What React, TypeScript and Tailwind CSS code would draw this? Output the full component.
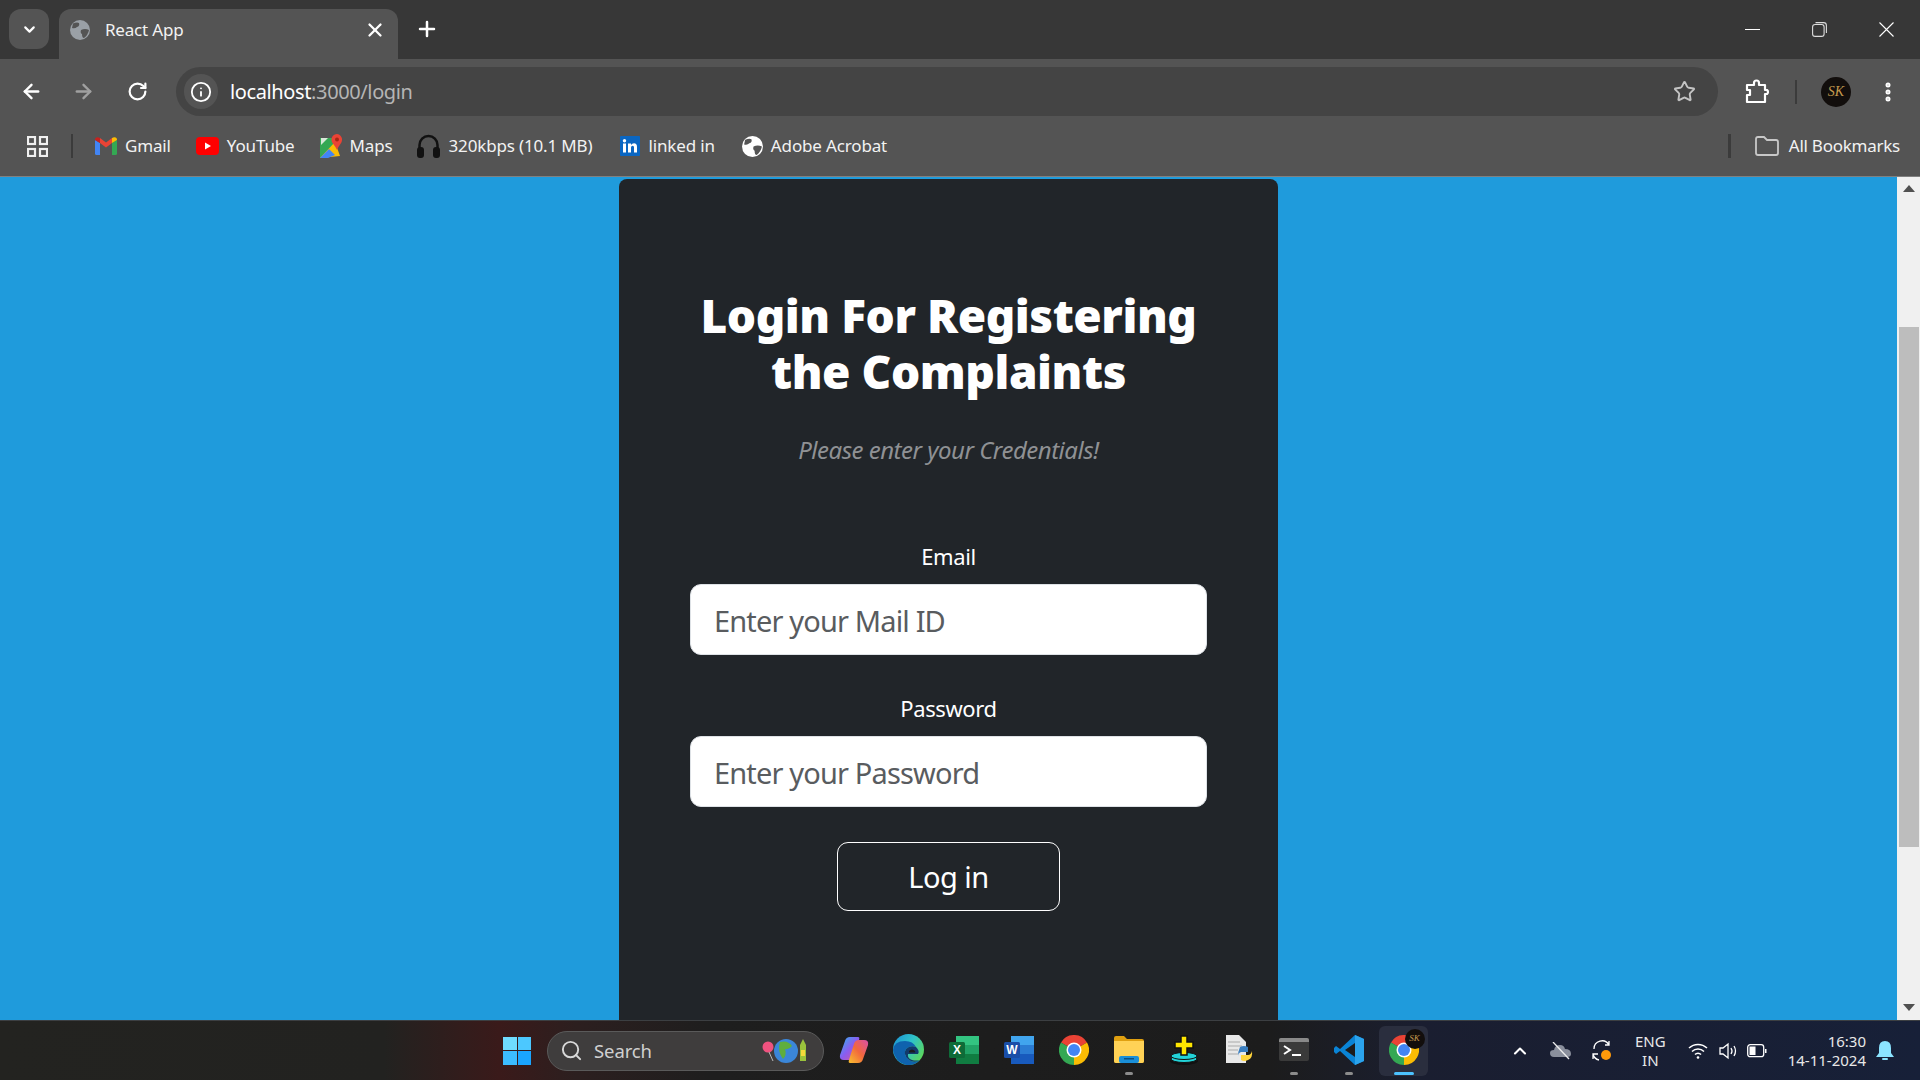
import { ArrowLeft, ArrowRight, ChevronDown, ChevronUp, Info, MoreVertical, Plus, RotateCw, Search, Star, X } from "lucide-react";
import type { ReactNode } from "react";

const uiFont = "font-['Noto_Sans',sans-serif]";

const GlobeIcon = ({ size = 20, color = "#9aa0a6", cut = "#545454" }: { size?: number; color?: string; cut?: string }) => (
  <svg width={size} height={size} viewBox="0 0 20 20">
    <circle cx="10" cy="10" r="10" fill={color} />
    <path d="M3 3.5 Q7 2 9 3 Q10 6 7 7 Q5 9 2 8 Z M11 10 Q15 8 19 10 Q18 15 14 18 Q12 18 12 14 Q10 13 11 10 Z" fill={cut} />
  </svg>
);

const GmailIcon = () => (
  <svg width="22" height="18" viewBox="0 0 22 18">
    <path d="M0 3 L5 6 V18 H1.5 Q0 18 0 16.5 Z" fill="#4285f4" />
    <path d="M22 3 L17 6 V18 H20.5 Q22 18 22 16.5 Z" fill="#34a853" />
    <path d="M5 6 L11 10.5 L17 6 V1 L11 5.5 L5 1 Z" fill="#ea4335" />
    <path d="M0 3 Q0 0 3 .3 L5 1 V6 Z" fill="#c5221f" />
    <path d="M22 3 Q22 0 19 .3 L17 1 V6 Z" fill="#fbbc04" />
  </svg>
);

const YoutubeIcon = () => (
  <svg width="23" height="18" viewBox="0 0 23 18">
    <rect width="23" height="18" rx="4" fill="#ff0000" />
    <path d="M9 5.5 L15 9 L9 12.5 Z" fill="#fff" />
  </svg>
);

const MapsIcon = () => (
  <svg width="22" height="24" viewBox="0 0 22 24">
    <path d="M0 4 H15 V20 L0 24 Z" fill="#34a853" />
    <path d="M0 24 L15 8 L20 22 Z" fill="#fbbc04" />
    <path d="M0 24 L9 15 L15 21 L8 24 Z" fill="#4285f4" />
    <path d="M1 4 H8 L1 11 Z" fill="#d9e8d9" />
    <path d="M17 0 A5.5 5.5 0 0 1 22 6 C22 9 19 11 17 16 C15 11 11.500 9 11.500 6 A5.500 5.500 0 0 1 17 0 Z" fill="#ea4335" />
    <circle cx="17" cy="5.500" r="2" fill="#a52714" />
  </svg>
);

const HeadphonesIcon = () => (
  <svg width="23" height="24" viewBox="0 0 23 24">
    <path d="M2.500 15 V11 A9 9 0 0 1 20.500 11 V15" fill="none" stroke="#111" strokeWidth="2.500" />
    <rect x="0" y="13" width="7" height="11" rx="3" fill="#111" />
    <rect x="16" y="13" width="7" height="11" rx="3" fill="#111" />
  </svg>
);

const LinkedinIcon = () => (
  <svg width="20" height="20" viewBox="0 0 20 20">
    <rect width="20" height="20" rx="1" fill="#0a66c2" />
    <rect x="3" y="7.500" width="3" height="9" fill="#fff" />
    <circle cx="4.500" cy="4.800" r="1.700" fill="#fff" />
    <path d="M8 7.500 H11 V9 Q12 7.300 14 7.300 Q17 7.300 17 11 V16.500 H14 V11.500 Q14 9.800 12.700 9.800 Q11 9.800 11 11.500 V16.500 H8 Z" fill="#fff" />
  </svg>
);

const ChromeIcon = ({ size = 30 }: { size?: number }) => (
  <svg width={size} height={size} viewBox="0 0 30 30">
    <path d="M15 15 L2 7.500 A15 15 0 0 1 28 7.500 Z" fill="#ea4335" />
    <path d="M15 15 L2 7.500 A15 15 0 0 0 15 30 Z" fill="#34a853" />
    <path d="M15 15 L28 7.500 A15 15 0 0 1 15 30 Z" fill="#fbbc04" />
    <circle cx="15" cy="15" r="7.500" fill="#fff" />
    <circle cx="15" cy="15" r="6" fill="#4285f4" />
  </svg>
);

const SkAvatar = ({ small = false }: { small?: boolean }) => (
  <span
    className={`flex items-center justify-center rounded-full bg-[#120e0c] font-['Liberation_Serif',serif] italic leading-none text-[#c49a4e] ${
      small ? "h-[20px] w-[20px] text-[9px]" : "h-[30px] w-[30px] text-[14px]"
    }`}
  >
    SK
  </span>
);

const TaskIcon = ({ children, running = false, active = false }: { children: ReactNode; running?: boolean; active?: boolean }) => (
  <div className="flex w-[55px] justify-center">
    <div className={`flex h-[50px] w-[49px] flex-col items-center rounded-md pt-[2px] ${active ? "bg-[#2a2e3e]" : ""}`}>
      <div className="flex h-[44px] items-center justify-center">{children}</div>
      {running && <div className="h-[3px] w-[8px] rounded-full bg-[#8c8c8c]" />}
      {active && <div className="h-[3px] w-[20px] rounded-full bg-[#4cc2ff]" />}
    </div>
  </div>
);

const Bookmark = ({ icon, label, className }: { icon: ReactNode; label: string; className: string }) => (
  <div className={`flex items-center gap-[8px] ${className}`}>
    {icon}
    <span className="text-[17px] tracking-[-0.15px] text-[#f2f2f2]">{label}</span>
  </div>
);

const Field = ({ label, placeholder, type }: { label: string; placeholder: string; type: string }) => (
  <div className="flex flex-col items-center">
    <label className="mb-[12px] text-[22px] leading-[32px] tracking-[-0.4px] text-white">{label}</label>
    <input
      type={type}
      placeholder={placeholder}
      className="h-[71px] w-[517px] rounded-[11px] border border-[#dee2e6] bg-white px-[23px] pt-[2px] text-[29px] tracking-[-0.85px] text-[#212529] outline-none placeholder:text-[#595c5f]"
    />
  </div>
);

export default function App() {
  return (
    <div className={`flex h-screen w-full flex-col overflow-hidden ${uiFont}`}>
      {/* tab strip */}
      <div className="flex h-[59px] shrink-0 items-start bg-[#373737] pl-[9px]">
        <div className="mt-[9px] flex h-[40px] w-[40px] items-center justify-center rounded-[12px] bg-[#545454]">
          <ChevronDown size={17} strokeWidth={3} color="#fff" />
        </div>
        <div className="mt-[9px] ml-[10px] flex h-[50px] w-[339px] items-start rounded-t-[12px] bg-[#545454] pl-[11px] pr-[12px] pt-[11px]">
          <GlobeIcon />
          <span className="ml-[15px] flex-1 text-[17px] leading-[20px] tracking-[-0.2px] text-[#f2f2f2]">React App</span>
          <X size={22} strokeWidth={2.500} color="#fff" className="-mt-[1px]" />
        </div>
        <Plus size={24} strokeWidth={2.500} color="#fff" className="mt-[17px] ml-[17px]" />
        <div className="flex-1" />
        <div className="mt-[22px] flex items-center gap-[52px] pr-[26px]">
          <div className="h-[1px] w-[15px] bg-white" />
          <svg width="15" height="15" viewBox="0 0 15 15" fill="none" stroke="#ddd" strokeWidth="1.100">
            <rect x=".6" y="2.500" width="11.500" height="11.900" rx="2.500" />
            <path d="M3.500 .6 H11.500 Q14.400 .6 14.400 3.500 V11" />
          </svg>
          <svg width="15" height="15" viewBox="0 0 15 15" fill="none" stroke="#fff" strokeWidth="1.100">
            <path d="M.5 .5 L14.500 14.500 M14.500 .5 L.5 14.500" />
          </svg>
        </div>
      </div>

      {/* toolbar */}
      <div className="flex h-[57px] shrink-0 items-center bg-[#545454] pt-[8px] pl-[20px] pr-[20px]">
        <ArrowLeft size={23} strokeWidth={2.500} color="#fff" />
        <ArrowRight size={23} strokeWidth={2.500} color="#a0a0a0" className="ml-[29px]" />
        <RotateCw size={21} strokeWidth={2.500} color="#fff" className="ml-[32px]" />
        <div className="ml-[28px] flex h-[49px] w-[1542px] items-center rounded-full bg-[#444444] pl-[8px] pr-[22px]">
          <div className="flex h-[35px] w-[34px] items-center justify-center rounded-full bg-[#545454]">
            <Info size={22} strokeWidth={2} color="#fff" />
          </div>
          <span className="ml-[12px] flex-1 text-[20px] leading-[26px] tracking-[-0.38px] text-white">
            localhost<span className="text-[#b5b5b5]">:3000/login</span>
          </span>
          <Star size={23} strokeWidth={2} color="#c4c4c4" />
        </div>
        <svg width="26" height="26" viewBox="0 0 26 26" fill="none" stroke="#fff" strokeWidth="2.200" className="ml-[27px]">
          <path d="M2 6 H9 V4 A2.500 2.500 0 0 1 14 4 V6 H20 V11 H22 A2.500 2.500 0 0 1 22 15 H20 V23 H2 V16 H5 V11 H2 Z" strokeLinejoin="round" />
        </svg>
        <div className="ml-[24px] h-[24px] w-[2px] bg-[#3b3b3b]" />
        <div className="ml-[24px]"><SkAvatar /></div>
        <MoreVertical size={24} strokeWidth={3} color="#fff" className="ml-[25px]" />
      </div>

      {/* bookmarks */}
      <div className="flex h-[61px] shrink-0 items-center border-b-[1px] border-[#808080] bg-[#545454] pl-[27px] pr-[20px]">
        <svg width="21" height="21" viewBox="0 0 21 21" fill="none" stroke="#f0f0f0" strokeWidth="2.200">
          <rect x="1" y="1" width="7" height="7" />
          <rect x="13" y="1" width="7" height="7" />
          <rect x="1" y="13" width="7" height="7" />
          <rect x="13" y="13" width="7" height="7" />
        </svg>
        <div className="ml-[23px] mr-[22px] h-[24px] w-[2px] bg-[#3b3b3b]" />
        <Bookmark icon={<GmailIcon />} label="Gmail" className="mr-[25px]" />
        <Bookmark icon={<YoutubeIcon />} label="YouTube" className="mr-[25px]" />
        <Bookmark icon={<MapsIcon />} label="Maps" className="mr-[25px]" />
        <Bookmark icon={<HeadphonesIcon />} label="320kbps (10.1 MB)" className="mr-[28px]" />
        <Bookmark icon={<LinkedinIcon />} label="linked in" className="mr-[27px]" />
        <Bookmark icon={<GlobeIcon size={21} color="#fff" />} label="Adobe Acrobat" className="" />
        <div className="flex-1" />
        <div className="mr-[24px] h-[24px] w-[3px] bg-[#3b3b3b]" />
        <svg width="24" height="20" viewBox="0 0 24 20" fill="none" stroke="#c8c8c8" strokeWidth="1.800" className="mr-[10px]">
          <path d="M1 3 Q1 1 3 1 H9 L12 4 H21 Q23 4 23 6 V17 Q23 19 21 19 H3 Q1 19 1 17 Z" />
        </svg>
        <span className="text-[17px] tracking-[-0.25px] text-[#f2f2f2]">All Bookmarks</span>
      </div>

      {/* page */}
      <div className="flex min-h-0 flex-1 bg-[#1f9bdc]">
        <div className="flex min-w-0 flex-1 justify-center">
          <div className="mt-[2px] flex w-[659px] flex-col items-center rounded-t-[8px] bg-[#212529] pt-[108px]">
            <h2 className="w-[540px] text-center text-[46px] leading-[56px] font-black tracking-[-0.45px] text-white">
              Login For Registering the Complaints
            </h2>
            <p className="mt-[36px] mb-[75px] text-[24px] leading-[30px] tracking-[-0.5px] text-[#8f9194] italic">
              Please enter your Credentials!
            </p>
            <div className="flex flex-col gap-[37px]">
              <Field label="Email" placeholder="Enter your Mail ID" type="email" />
              <Field label="Password" placeholder="Enter your Password" type="password" />
            </div>
            <button className="mt-[35px] h-[69px] w-[223px] rounded-[11px] border border-white pt-[1px] text-[29px] tracking-[-0.5px] text-white">
              Log in
            </button>
          </div>
        </div>
        <div className="flex w-[23px] shrink-0 flex-col items-center bg-[#f0f0f0]">
          <div className="mt-[8px] h-0 w-0 border-x-[6px] border-b-[7px] border-x-transparent border-b-[#505050]" />
          <div className="mt-[135px] ml-[1px] h-[520px] w-[20px] bg-[#bdbdbd]" />
          <div className="flex-1" />
          <div className="mb-[9px] h-0 w-0 border-x-[6px] border-t-[7px] border-x-transparent border-t-[#505050]" />
        </div>
      </div>

      {/* taskbar */}
      <div className="flex h-[60px] shrink-0 items-center border-t border-[#3c3f42] bg-[linear-gradient(90deg,#232320_0%,#222220_20%,#3a1a1a_26%,#2c1f1f_30%,#1e1e1e_37%,#1c1c1c_66%,#1a1e30_74%,#172038_100%)]">
        <div className="ml-[499px] flex h-[36px] w-[36px] items-center justify-center">
          <div className="grid h-[28px] w-[28px] grid-cols-2 gap-[1px]">
            <div className="bg-[#6fdcff]" />
            <div className="bg-[#4cc8ff]" />
            <div className="bg-[#3cbcff]" />
            <div className="bg-[#1aa5ff]" />
          </div>
        </div>
        <div className="ml-[12px] flex h-[40px] w-[277px] items-center rounded-full border border-[#5a5a5a] bg-[#3f3d3d] pl-[12px] pr-[14px]">
          <Search size={23} strokeWidth={2} color="#d8d8d8" />
          <span className="ml-[11px] flex-1 text-[18.500px] tracking-[-0.1px] text-[#d0d0d0]">Search</span>
          <svg width="48" height="28" viewBox="0 0 46 28">
            <circle cx="6" cy="10" r="5.500" fill="#f0527f" />
            <path d="M7 15 L11 24" stroke="#bbb" strokeWidth="1" />
            <circle cx="24" cy="14" r="12" fill="#3b86d8" />
            <path d="M18 5 Q26 3 30 9 Q27 13 23 12 Q25 18 21 22 Q15 14 18 5 Z" fill="#5fae3e" />
            <path d="M38 8 L41 2 L44 8 V24 H38 Z" fill="#9ac23c" />
            <rect x="39" y="13" width="4" height="6" fill="#f4d93a" />
          </svg>
        </div>
        <div className="ml-[2px] flex items-center">
          <TaskIcon>
            <svg width="30" height="28" viewBox="0 0 30 28">
              <defs>
                <linearGradient id="cpa" x1="0" y1="0" x2="1" y2="1">
                  <stop offset="0" stopColor="#2bb7f0" />
                  <stop offset=".5" stopColor="#8a5cf0" />
                  <stop offset="1" stopColor="#e0558f" />
                </linearGradient>
                <linearGradient id="cpb" x1="0" y1="1" x2="1" y2="0">
                  <stop offset="0" stopColor="#f9c02e" />
                  <stop offset=".5" stopColor="#f2683c" />
                  <stop offset="1" stopColor="#d84fa8" />
                </linearGradient>
              </defs>
              <path d="M11 1 H19 Q21 1 20 4 L15 20 Q14 24 10 24 H5 Q0 24 1 19 L6 5 Q7 1 11 1 Z" fill="url(#cpa)" />
              <path d="M19 27 H11 Q9 27 10 24 L15 8 Q16 4 20 4 H25 Q30 4 29 9 L24 23 Q23 27 19 27 Z" fill="url(#cpb)" />
            </svg>
          </TaskIcon>
          <TaskIcon>
            <svg width="31" height="31" viewBox="0 0 31 31">
              <defs>
                <linearGradient id="edg" x1="0" y1="0" x2="1" y2=".6">
                  <stop offset="0" stopColor="#1a8fd8" />
                  <stop offset=".55" stopColor="#2fc3c8" />
                  <stop offset="1" stopColor="#5ad660" />
                </linearGradient>
              </defs>
              <circle cx="15.500" cy="15.500" r="15.500" fill="url(#edg)" />
              <path d="M0 16 Q1 7 12 7 Q20 7 23 13 Q17 11 13 15 Q10 20 15 25 Q20 30 27 26 Q21 32 13 31 Q2 28 0 16 Z" fill="#0f62ae" />
              <path d="M13 15 Q17 11 23 13 Q27 17 25 20 H15 Q14 24 19 26 Q23 27 27 26 Q20 30 15 25 Q10 20 13 15 Z" fill="#123a6b" />
              <path d="M16 17 Q19 14 22 17 Q22.500 18 22 18.500 H16 Z" fill="#1c1c1c" />
            </svg>
          </TaskIcon>
          <TaskIcon>
            <svg width="30" height="28" viewBox="0 0 30 28">
              <rect x="7" y="0" width="23" height="9" fill="#33c481" />
              <rect x="7" y="9" width="23" height="9" fill="#21a366" />
              <rect x="7" y="18" width="23" height="10" fill="#107c41" />
              <rect x="0" y="6" width="16" height="16" rx="1.500" fill="#0e6b38" />
              <text x="8" y="18" textAnchor="middle" fontSize="12" fontWeight="700" fill="#fff" fontFamily="Liberation Sans">X</text>
            </svg>
          </TaskIcon>
          <TaskIcon>
            <svg width="30" height="28" viewBox="0 0 30 28">
              <rect x="7" y="0" width="23" height="9" fill="#41a5ee" />
              <rect x="7" y="9" width="23" height="9" fill="#2b7cd3" />
              <rect x="7" y="18" width="23" height="10" fill="#185abd" />
              <rect x="0" y="6" width="16" height="16" rx="1.500" fill="#1a4ea8" />
              <text x="8" y="18" textAnchor="middle" fontSize="12" fontWeight="700" fill="#fff" fontFamily="Liberation Sans">W</text>
            </svg>
          </TaskIcon>
          <TaskIcon><ChromeIcon /></TaskIcon>
          <TaskIcon running>
            <svg width="30" height="27" viewBox="0 0 30 27">
              <path d="M0 2 Q0 0 2 0 H10 L13 3 H28 Q30 3 30 5 V25 Q30 27 28 27 H2 Q0 27 0 25 Z" fill="#e0a010" />
              <path d="M0 5 H30 V25 Q30 27 28 27 H2 Q0 27 0 25 Z" fill="#ffd256" />
              <rect x="5" y="20" width="20" height="7" rx="2" fill="#1a8fd8" />
              <rect x="10" y="22" width="10" height="1.500" fill="#0e4f80" />
            </svg>
          </TaskIcon>
          <TaskIcon>
            <svg width="30" height="30" viewBox="0 0 30 30">
              <ellipse cx="15" cy="26" rx="14" ry="4" fill="#111" />
              <ellipse cx="15" cy="24" rx="13" ry="3.500" fill="#22d3d8" stroke="#111" />
              <ellipse cx="15" cy="21" rx="13" ry="3.500" fill="#22d3d8" stroke="#111" />
              <path d="M12 1 H18 V7 H24 V13 H18 V20 H12 V13 H6 V7 H12 Z" fill="#ffe600" stroke="#111" strokeWidth="1.500" />
            </svg>
          </TaskIcon>
          <TaskIcon>
            <svg width="30" height="30" viewBox="0 0 30 30">
              <path d="M2 0 H15 L22 7 V28 H2 Z" fill="#e8e8e8" />
              <path d="M4 7 H16 M4 11 H18 M4 15 H14 M4 19 H14" stroke="#aaa" strokeWidth="1" />
              <path d="M16 12 Q20 10 24 12 V17 H17 Q14 18 14 22 Q14 16 16 12 Z" fill="#3b7fc0" />
              <path d="M28 16 Q29 23 24 25 Q20 27 17 25 V20 H24 Q27 20 28 16 Z" fill="#ffd43b" />
            </svg>
          </TaskIcon>
          <TaskIcon running>
            <svg width="30" height="23" viewBox="0 0 30 23">
              <rect width="30" height="23" rx="2" fill="#3a3a3a" />
              <path d="M0 2 Q0 0 2 0 H28 Q30 0 30 2 V4 H0 Z" fill="#8a8a8a" />
              <path d="M5 8 L11 12 L5 16" stroke="#fff" strokeWidth="2" fill="none" />
              <rect x="13" y="16" width="9" height="2" fill="#fff" />
            </svg>
          </TaskIcon>
          <TaskIcon running>
            <svg width="30" height="30" viewBox="0 0 30 30">
              <path d="M21 0 L30 4 V26 L21 30 L6 16 L2 19 L0 17 V13 L2 11 L6 14 Z" fill="#0a84d6" />
              <path d="M21 8 L11 15 L21 22 Z" fill="#1c1c1c" />
              <path d="M21 0 L30 4 V26 L21 30 Z" fill="#2ba3ec" />
            </svg>
          </TaskIcon>
          <TaskIcon active>
            <div className="relative">
              <ChromeIcon />
              <div className="absolute -top-[6px] -right-[6px]"><SkAvatar small /></div>
            </div>
          </TaskIcon>
        </div>
        <div className="flex-1" />
        <div className="flex items-center pr-[26px] text-white">
          <ChevronUp size={20} strokeWidth={2.500} color="#fff" className="mr-[1px]" />
          <svg width="22" height="18" viewBox="0 0 22 18" className="ml-[19px]">
            <path d="M4 15 Q0 15 0 11 Q0 8 4 8 Q5 3 10 3 Q14 3 15 7 Q21 7 21 12 Q21 15 17 15 Z" fill="#8a8f9c" />
            <path d="M3 0 L19 17" stroke="#eee" strokeWidth="1.300" />
          </svg>
          <svg width="22" height="22" viewBox="0 0 22 22" fill="none" stroke="#fff" strokeWidth="1.300" className="ml-[19px]">
            <path d="M3 9 A8 8 0 0 1 18 5 M18 1 V5 H14" />
            <path d="M2 14 A8 8 0 0 0 8 20 M2 19 V14 H7" />
            <circle cx="15" cy="15" r="5" fill="#ff9a0a" stroke="none" />
          </svg>
          <div className="ml-[22px] flex flex-col items-center text-[15px] leading-[19px] text-[#e8e8e8]">
            <span>ENG</span>
            <span>IN</span>
          </div>
          <svg width="20" height="16" viewBox="0 0 20 16" fill="none" stroke="#fff" strokeWidth="1.500" className="ml-[22px]">
            <path d="M1 5 A13 13 0 0 1 19 5 M4 8.500 A8.500 8.500 0 0 1 16 8.500 M7 11.500 A4 4 0 0 1 13 11.500" />
            <circle cx="10" cy="14.500" r="1.300" fill="#fff" stroke="none" />
          </svg>
          <svg width="20" height="18" viewBox="0 0 20 18" fill="none" stroke="#fff" strokeWidth="1.300" className="ml-[11px]">
            <path d="M1 6 H4 L9 2 V16 L4 12 H1 Z M12 6 Q14 9 12 12 M15 4 Q18 9 15 14" />
          </svg>
          <svg width="20" height="14" viewBox="0 0 20 14" className="ml-[8px]">
            <rect x=".7" y=".7" width="16" height="12" rx="2.500" fill="none" stroke="#fff" strokeWidth="1.300" />
            <rect x="2.500" y="2.500" width="6" height="8.500" fill="#fff" />
            <rect x="18" y="5" width="1.500" height="4" fill="#fff" />
          </svg>
          <div className="ml-[21px] flex flex-col items-end text-[15px] leading-[19px] text-[#e8e8e8]">
            <span>16:30</span>
            <span>14-11-2024</span>
          </div>
          <svg width="18" height="20" viewBox="0 0 18 20" className="ml-[10px]">
            <path d="M9 0 Q15 0 15 7 V12 L18 16 H0 L3 12 V7 Q3 0 9 0 Z" fill="#8be4ff" />
            <rect x="6" y="17" width="6" height="2" rx="1" fill="#8be4ff" />
          </svg>
        </div>
      </div>
    </div>
  );
}
